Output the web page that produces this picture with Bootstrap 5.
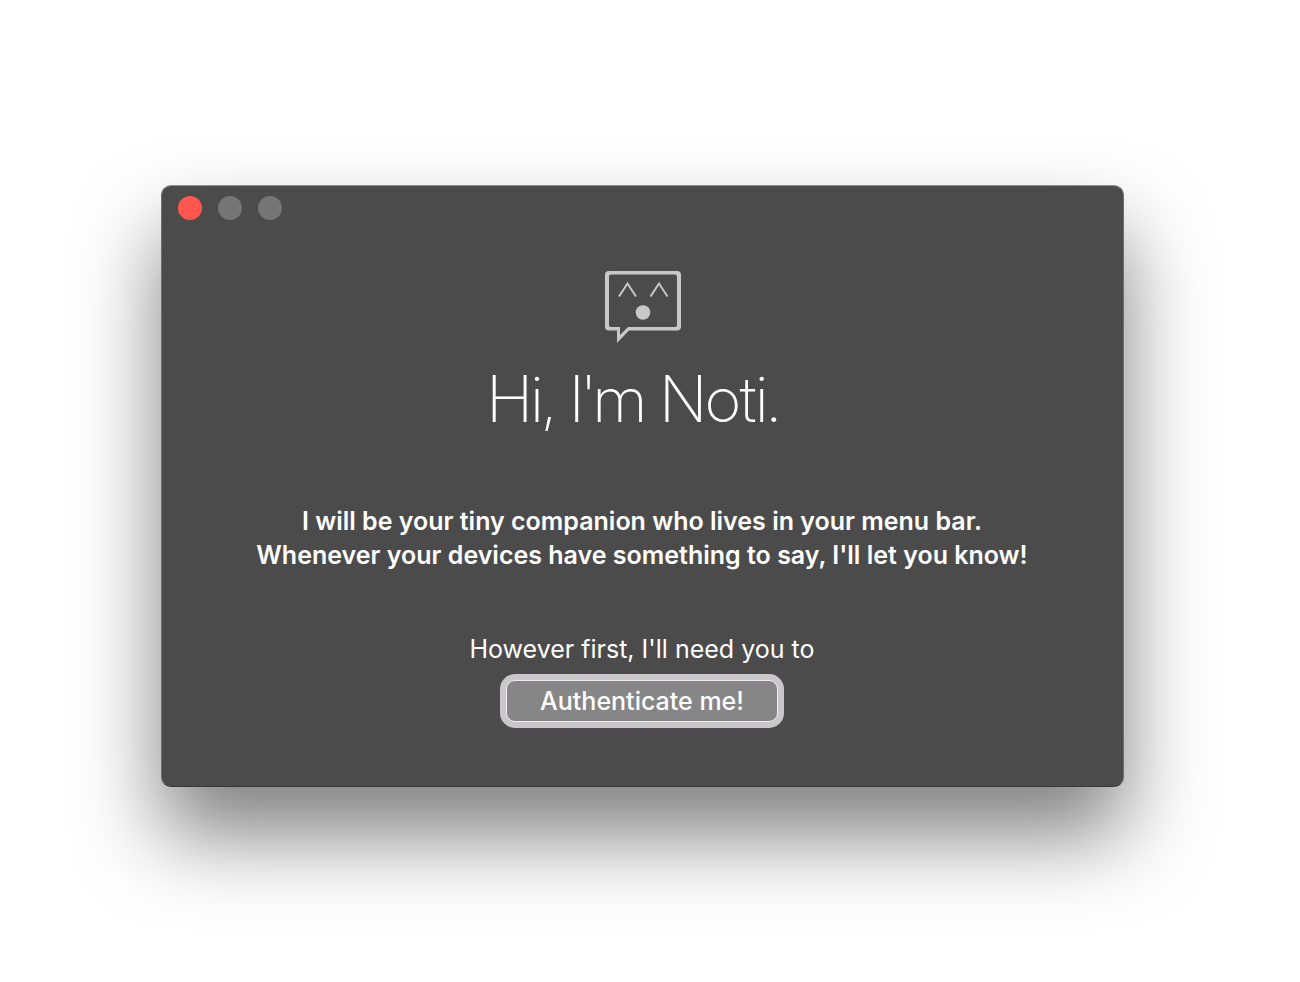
<!DOCTYPE html>
<html lang="en">
<head>
<meta charset="utf-8">
<meta name="viewport" content="width=device-width, initial-scale=1">
<title>Noti</title>
<link href="https://cdn.jsdelivr.net/npm/bootstrap@5.3.0/dist/css/bootstrap.min.css" rel="stylesheet">
<style>
  body { font-family: Inter, "Liberation Sans", sans-serif; background: #fff; }
  .desktop { padding: 0 16px 10px 0; }
  .app-window {
    width: 75%;
    background: #4b4b4b;
    border: 1px solid #6c706e;
    border-top-color: #8a928e;
    border-bottom-color: #383838;
    border-radius: 10px;
    box-shadow: 0 48px 84px rgba(0, 0, 0, .5);
  }
  .title-bar { gap: 16px; padding: 10px 16px; }
  .dot { width: 24px; height: 24px; background: #757575; }
  .dot-close { background: #ff564f; }
  .welcome { padding: 40px 16px 58px; }
  .welcome h1 {
    font-family: "Inter Display", Inter, sans-serif;
    font-size: 64px; line-height: 78px; font-weight: 250;
    margin: 16px 16px 66px 0;
  }
  .welcome p { font-size: 25px; line-height: 34px; }
  .intro { font-weight: 600; margin-bottom: 60px; }
  .btn-auth {
    width: 272px; height: 42px; padding: 0; margin: 6px;
    font-size: 25px; line-height: 38px; font-weight: 500;
    color: #fff; background: #868686;
    border: 1px solid #efedef; border-radius: 9px;
    box-shadow: 0 0 0 6px #c9c7c9;
  }
  .btn-auth:hover, .btn-auth:active { color: #fff; background: #7c7c7c; }
</style>
</head>
<body>
<div class="desktop min-vh-100 d-flex align-items-center justify-content-center">
  <main class="app-window text-white">
    <div class="title-bar d-flex">
      <button type="button" class="dot dot-close rounded-circle border-0 p-0" aria-label="Close"></button>
      <button type="button" class="dot rounded-circle border-0 p-0" aria-label="Minimize" disabled></button>
      <button type="button" class="dot rounded-circle border-0 p-0" aria-label="Zoom" disabled></button>
    </div>
    <div class="welcome d-flex flex-column align-items-center text-center">
      <svg width="78" height="74" viewBox="0 0 78 74" fill="none" stroke="#c8c8c8" aria-hidden="true">
        <path d="M6 1H74Q78 1 78 5V56.500Q78 60.500 74 60.500H26L14 73V60.500H6Q2 60.500 2 56.500V5Q2 1 6 1ZM8 4.500Q6 4.500 6 6.500V55Q6 57 8 57H17V65L25 57H72Q74 57 74 55V6.500Q74 4.500 72 4.500Z" fill="#c8c8c8" fill-rule="evenodd" stroke="none"/>
        <path d="M16 26.500L24.500 13.500L33 26.500M47.500 26.500L56 13.500L64.500 26.500" stroke-width="2"/>
        <circle cx="40" cy="42.500" r="7.300" fill="#c8c8c8" stroke="none"/>
      </svg>
      <h1>Hi, I'm Noti.</h1>
      <p class="intro">I will be your tiny companion who lives in your menu bar.<br>Whenever your devices have something to say, I'll let you know!</p>
      <p class="mb-2">However first, I'll need you to</p>
      <button type="button" class="btn btn-auth">Authenticate me!</button>
    </div>
  </main>
</div>
<script src="https://cdn.jsdelivr.net/npm/bootstrap@5.3.0/dist/js/bootstrap.bundle.min.js"></script>
</body>
</html>
